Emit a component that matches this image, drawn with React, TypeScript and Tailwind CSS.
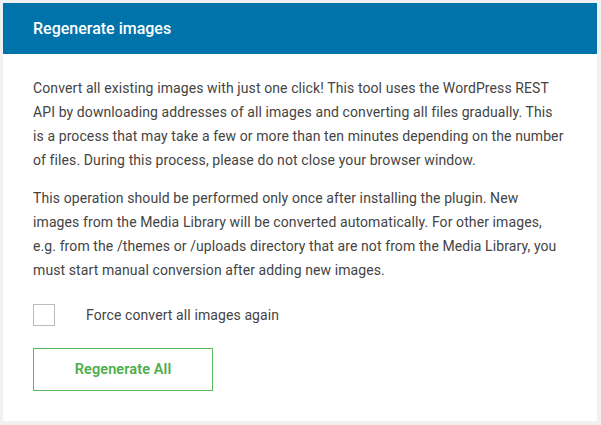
import { useState } from 'react';

export default function App() {
  const [force, setForce] = useState(false);

  return (
    <div className="min-h-screen bg-[#f1f1f1] p-[3px] font-['Roboto',sans-serif]">
      <div className="w-[594px] h-[418px] bg-white">
        <div className="h-[51px] bg-[#0073aa] flex items-center px-[30px]">
          <h2 className="text-[16px] text-white font-medium">Regenerate images</h2>
        </div>
        <div className="pl-[30px] pr-[32px] pt-[22px] text-[14px] leading-[24px] tracking-[0.1px] text-[#444]">
          <p>
            Convert all existing images with just one click! This tool uses the WordPress REST API by
            downloading addresses of all images and converting all files gradually. This is a process
            that may take a few or more than ten minutes depending on the number of files. During this
            process, please do not close your browser window.
          </p>
          <p className="mt-[14px]">
            This operation should be performed only once after installing the plugin. New images from
            the Media Library will be converted automatically. For other images, e.g. from the /themes
            or /uploads directory that are not from the Media Library, you must start manual conversion
            after adding new images.
          </p>
          <label className="mt-[21px] flex items-center cursor-pointer">
            <span
              className="w-[22px] h-[22px] border border-[#bbb] bg-white shrink-0"
              onClick={() => setForce(!force)}
            >
              {force && <span className="block w-full h-full bg-[#0073aa]" />}
            </span>
            <span className="ml-[31px]">Force convert all images again</span>
          </label>
          <button className="mt-[21px] w-[180px] h-[43px] border border-[#5cb85c] text-[#4cae4c] font-semibold text-[14.5px]">
            Regenerate All
          </button>
        </div>
      </div>
    </div>
  );
}
